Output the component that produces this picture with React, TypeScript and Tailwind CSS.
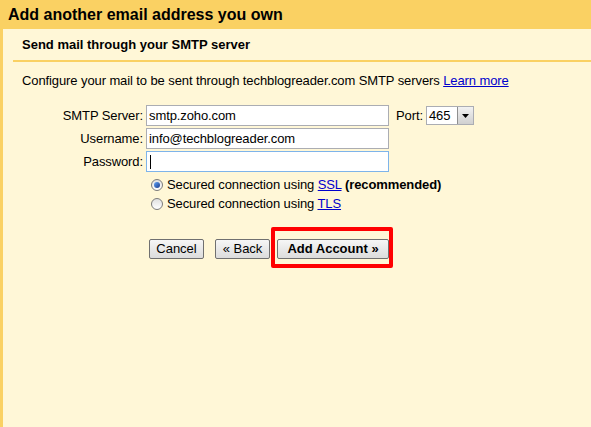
import React from "react";

export default function App() {
  const font = { fontFamily: '"Liberation Sans", Arial, sans-serif' };
  const btn =
    "h-[20px] border border-[#707070] rounded-[2px] bg-gradient-to-b from-[#f6f6f6] to-[#dcdcdc] flex items-center justify-center";
  return (
    <div className="w-[591px] h-[427px] overflow-hidden bg-[#fff7d7] text-[13px] text-black flex flex-col" style={font}>
      <div className="h-[29px] bg-[#fad163] flex items-center pl-[8px] shrink-0">
        <span className="text-[16px] font-bold leading-none">Add another email address you own</span>
      </div>
      <div className="flex-1 border-l-[3px] border-[#fad163] flex flex-col tracking-[-0.1px]">
        <div className="h-[31px] flex items-center pl-[19px] font-bold pt-[1px] tracking-normal">Send mail through your SMTP server</div>
        <div className="ml-[10px] h-[2px] bg-[#fad163]"></div>
        <div className="pl-[19px] pt-[9px] h-[26px]">
          Configure your mail to be sent through techblogreader.com SMTP servers{" "}
          <span className="text-[#0000cc] underline">Learn more</span>
        </div>
        <div className="mt-[17px] flex flex-col gap-[2px]">
          <div className="flex items-center h-[21px]">
            <div className="w-[143px] text-right pr-[3px]">SMTP Server:</div>
            <div className="w-[243px] h-[21px] bg-white border border-[#abadb3] pl-[2px] flex items-center">smtp.zoho.com</div>
            <div className="ml-[7px] pr-[3px]">Port:</div>
            <div className="h-[19px] w-[48px] bg-white border border-[#abadb3] flex items-center">
              <span className="pl-[2px] flex-1">465</span>
              <div className="w-[16px] h-[17px] bg-gradient-to-b from-[#f2f2f2] to-[#d0d0d0] border-l border-[#8f8f8f] flex items-center justify-center">
                <svg width="7" height="4" viewBox="0 0 7 4"><path d="M0 0h7L3.5 4z" fill="#000" /></svg>
              </div>
            </div>
          </div>
          <div className="flex items-center h-[21px]">
            <div className="w-[143px] text-right pr-[3px]">Username:</div>
            <div className="w-[243px] h-[21px] bg-white border border-[#abadb3] pl-[2px] flex items-center">info@techblogreader.com</div>
          </div>
          <div className="flex items-center h-[21px]">
            <div className="w-[143px] text-right pr-[3px]">Password:</div>
            <div className="w-[243px] h-[21px] bg-white border border-[#7eb4ea] pl-[3px] flex items-center">
              <div className="w-[1px] h-[14px] bg-black"></div>
            </div>
          </div>
        </div>
        <div className="mt-[3px] pl-[148px] flex flex-col">
          <div className="flex items-center h-[19px] gap-[4px]">
            <div className="w-[12px] h-[12px] rounded-full border border-[#7b7b7b] bg-gradient-to-b from-[#e0e0e0] to-white flex items-center justify-center">
              <div className="w-[6px] h-[6px] rounded-full bg-gradient-to-br from-[#60a5fa] to-[#1e3a8a]"></div>
            </div>
            <span>
              Secured connection using <span className="text-[#0000cc] underline">SSL</span> <b>(recommended)</b>
            </span>
          </div>
          <div className="flex items-center h-[19px] gap-[4px]">
            <div className="w-[12px] h-[12px] rounded-full border border-[#7b7b7b] bg-gradient-to-b from-[#e0e0e0] to-white"></div>
            <span>
              Secured connection using <span className="text-[#0000cc] underline">TLS</span>
            </span>
          </div>
        </div>
        <div className="mt-[14px] pl-[146px] flex items-start tracking-normal">
          <div className={btn + " w-[55px] mt-[12px]"}>Cancel</div>
          <div className={btn + " w-[55px] ml-[11px] mt-[12px]"}>« Back</div>
          <div className="ml-[1px] border-[4px] border-[#ff0000] pl-[2px] pr-0 pt-[8px] pb-[5px] rounded-[2px]">
            <div className={btn + " w-[112px] font-bold"}>Add Account »</div>
          </div>
        </div>
      </div>
    </div>
  );
}
